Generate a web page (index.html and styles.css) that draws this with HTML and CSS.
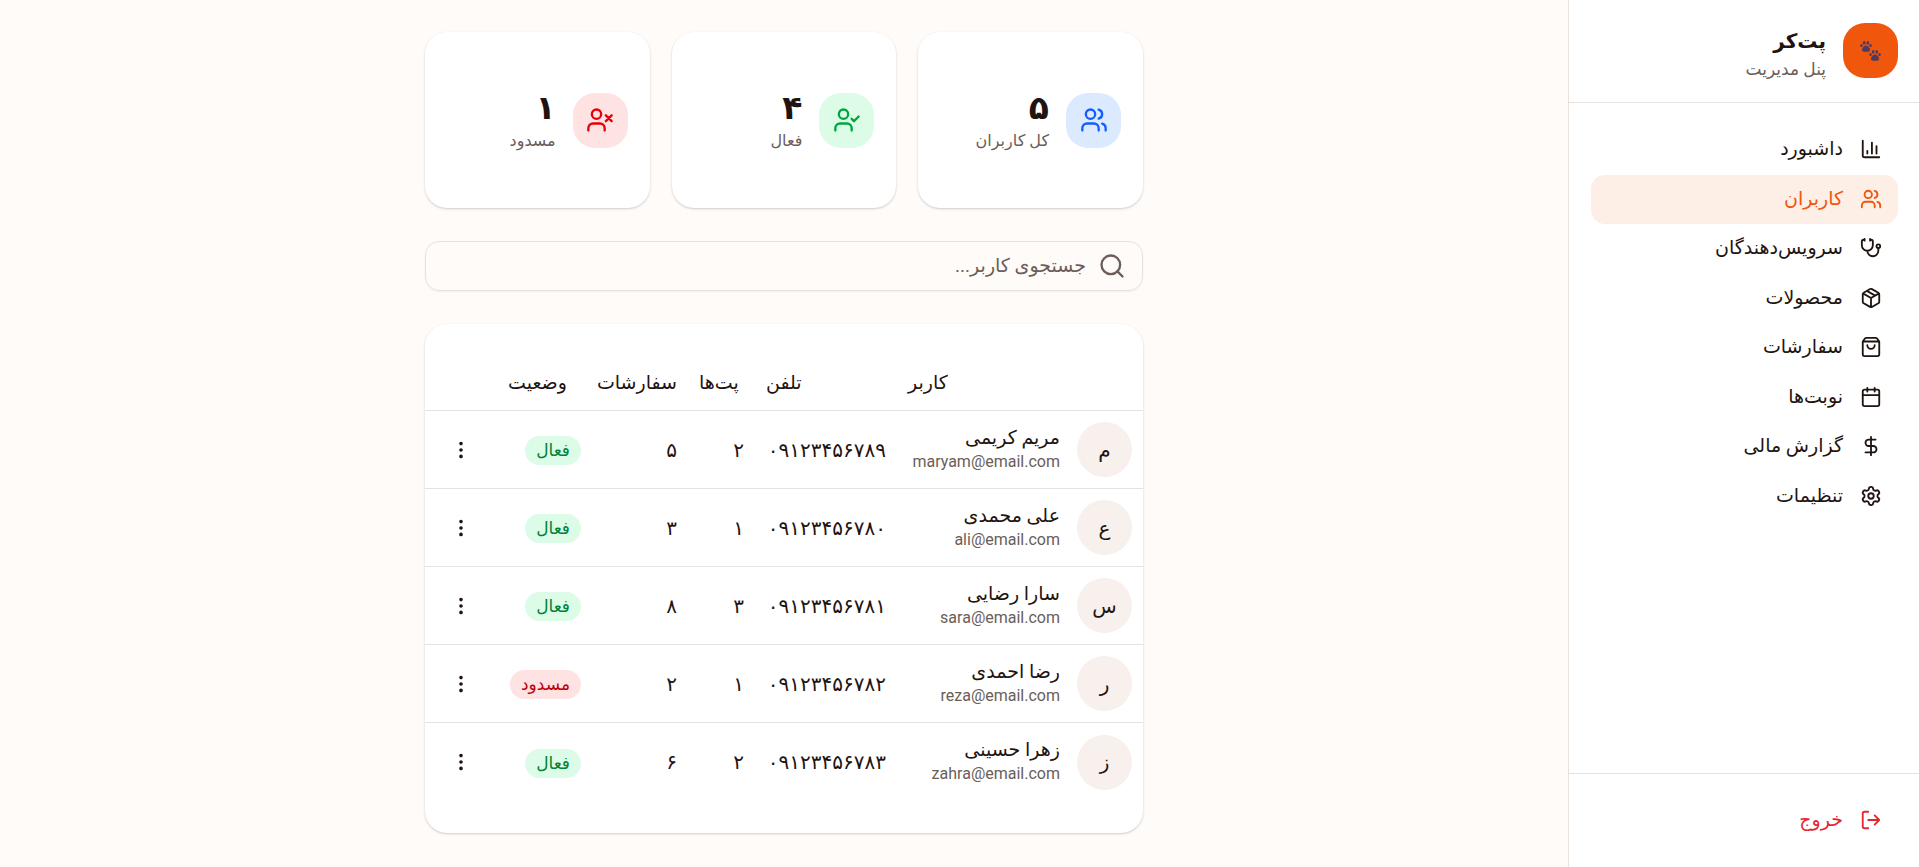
FILE: index.html
```html
<!DOCTYPE html>
<html lang="fa" dir="rtl">
<head>
<meta charset="utf-8">
<meta name="viewport" content="width=device-width, initial-scale=1">
<title>پت‌کر - کاربران</title>
<link rel="stylesheet" href="styles.css">
</head>
<body>
<svg class="sprite" aria-hidden="true">
  <symbol id="i-chart" viewBox="0 0 24 24"><path d="M3 3v16a2 2 0 0 0 2 2h16M18 17V9M13 17V5M8 17v-3"/></symbol>
  <symbol id="i-users" viewBox="0 0 24 24"><path d="M16 21v-2a4 4 0 0 0-4-4H6a4 4 0 0 0-4 4v2M16 3.128a4 4 0 0 1 0 7.744M22 21v-2a4 4 0 0 0-3-3.87"/><circle cx="9" cy="7" r="4"/></symbol>
  <symbol id="i-check" viewBox="0 0 24 24"><path d="m16 11 2 2 4-4M16 21v-2a4 4 0 0 0-4-4H6a4 4 0 0 0-4 4v2"/><circle cx="9" cy="7" r="4"/></symbol>
  <symbol id="i-blocked" viewBox="0 0 24 24"><path d="m17 8 5 5M22 8l-5 5M16 21v-2a4 4 0 0 0-4-4H6a4 4 0 0 0-4 4v2"/><circle cx="9" cy="7" r="4"/></symbol>
  <symbol id="i-steth" viewBox="0 0 24 24"><path d="M11 2v2M5 2v2M5 3H4a2 2 0 0 0-2 2v4a6 6 0 0 0 12 0V5a2 2 0 0 0-2-2h-1M8 15a6 6 0 0 0 12 0v-3"/><circle cx="20" cy="10" r="2"/></symbol>
  <symbol id="i-package" viewBox="0 0 24 24"><path d="M11 21.73a2 2 0 0 0 2 0l7-4A2 2 0 0 0 21 16V8a2 2 0 0 0-1-1.73l-7-4a2 2 0 0 0-2 0l-7 4A2 2 0 0 0 3 8v8a2 2 0 0 0 1 1.73zM12 22V12M3.29 7 12 12l8.71-5M7.5 4.27l9 5.15"/></symbol>
  <symbol id="i-bag" viewBox="0 0 24 24"><path d="M16 10a4 4 0 0 1-8 0M3.103 6.034h17.794M3.4 5.467a2 2 0 0 0-.4 1.2V20a2 2 0 0 0 2 2h14a2 2 0 0 0 2-2V6.667a2 2 0 0 0-.4-1.2l-2-2.667A2 2 0 0 0 17 2H7a2 2 0 0 0-1.6.8z"/></symbol>
  <symbol id="i-calendar" viewBox="0 0 24 24"><path d="M8 2v4M16 2v4M3 10h18"/><rect x="3" y="4" width="18" height="18" rx="2"/></symbol>
  <symbol id="i-dollar" viewBox="0 0 24 24"><path d="M12 2v20M17 5H9.500a3.500 3.500 0 0 0 0 7h5a3.500 3.500 0 0 1 0 7H6"/></symbol>
  <symbol id="i-settings" viewBox="0 0 24 24"><path d="M9.671 4.136a2.340 2.340 0 0 1 4.659 0 2.340 2.340 0 0 0 3.319 1.915 2.340 2.340 0 0 1 2.330 4.033 2.340 2.340 0 0 0 0 3.831 2.340 2.340 0 0 1-2.330 4.033 2.340 2.340 0 0 0-3.319 1.915 2.340 2.340 0 0 1-4.659 0 2.340 2.340 0 0 0-3.320-1.915 2.340 2.340 0 0 1-2.330-4.033 2.340 2.340 0 0 0 0-3.831A2.340 2.340 0 0 1 6.350 6.051a2.340 2.340 0 0 0 3.319-1.915"/><circle cx="12" cy="12" r="3"/></symbol>
  <symbol id="i-logout" viewBox="0 0 24 24"><path d="m16 17 5-5-5-5M21 12H9M9 21H5a2 2 0 0 1-2-2V5a2 2 0 0 1 2-2h4"/></symbol>
  <symbol id="i-search" viewBox="0 0 24 24"><path d="m21 21-4.340-4.340"/><circle cx="11" cy="11" r="8"/></symbol>
  <symbol id="i-dots" viewBox="0 0 24 24"><circle cx="12" cy="12" r="1"/><circle cx="12" cy="5" r="1"/><circle cx="12" cy="19" r="1"/></symbol>
  <symbol id="paw" viewBox="0 0 12 11"><ellipse cx="1.500" cy="4.500" rx="1.300" ry="1.600"/><ellipse cx="4.200" cy="1.900" rx="1.400" ry="1.800"/><ellipse cx="7.800" cy="1.900" rx="1.400" ry="1.800"/><ellipse cx="10.500" cy="4.500" rx="1.300" ry="1.600"/><path d="M6 4.400c2 0 4 2.400 4 4.400 0 1.400-1 1.900-2 1.900H4c-1 0-2-.5-2-1.900 0-2 2-4.400 4-4.400z"/></symbol>
</svg>

<div class="app">
  <aside class="sidebar">
    <header class="brand">
      <span class="brand-logo"><svg viewBox="0 0 22 20" aria-hidden="true"><use href="#paw" x="0" y="0" width="12" height="11"/><use href="#paw" x="9" y="9" width="12" height="11"/></svg></span>
      <div class="brand-text">
        <h1 class="brand-name">پت‌کر</h1>
        <p class="brand-sub">پنل مدیریت</p>
      </div>
    </header>
    <nav class="nav">
      <a class="nav-item" href="#dashboard"><svg class="icon"><use href="#i-chart"/></svg>داشبورد</a>
      <a class="nav-item nav-item-active" href="#users" aria-current="page"><svg class="icon"><use href="#i-users"/></svg>کاربران</a>
      <a class="nav-item" href="#providers"><svg class="icon"><use href="#i-steth"/></svg>سرویس‌دهندگان</a>
      <a class="nav-item" href="#products"><svg class="icon"><use href="#i-package"/></svg>محصولات</a>
      <a class="nav-item" href="#orders"><svg class="icon"><use href="#i-bag"/></svg>سفارشات</a>
      <a class="nav-item" href="#appointments"><svg class="icon"><use href="#i-calendar"/></svg>نوبت‌ها</a>
      <a class="nav-item" href="#finance"><svg class="icon"><use href="#i-dollar"/></svg>گزارش مالی</a>
      <a class="nav-item" href="#settings"><svg class="icon"><use href="#i-settings"/></svg>تنظیمات</a>
    </nav>
    <footer class="sidebar-foot">
      <button class="nav-item nav-item-exit" type="button"><svg class="icon"><use href="#i-logout"/></svg>خروج</button>
    </footer>
  </aside>

  <main class="main">
    <div class="content">
      <section class="stats">
        <div class="card stat">
          <span class="stat-icon stat-icon-blue"><svg class="icon icon-lg"><use href="#i-users"/></svg></span>
          <div><p class="stat-value">۵</p><p class="stat-label">کل کاربران</p></div>
        </div>
        <div class="card stat">
          <span class="stat-icon stat-icon-green"><svg class="icon icon-lg"><use href="#i-check"/></svg></span>
          <div><p class="stat-value">۴</p><p class="stat-label">فعال</p></div>
        </div>
        <div class="card stat">
          <span class="stat-icon stat-icon-red"><svg class="icon icon-lg"><use href="#i-blocked"/></svg></span>
          <div><p class="stat-value">۱</p><p class="stat-label">مسدود</p></div>
        </div>
      </section>

      <label class="search">
        <svg class="icon icon-lg"><use href="#i-search"/></svg>
        <input class="search-input" type="text" aria-label="جستجوی کاربر" placeholder="جستجوی کاربر...">
      </label>

      <section class="card table-card">
        <table class="users">
          <colgroup><col class="col-user"><col class="col-phone"><col class="col-pets"><col class="col-orders"><col class="col-status"><col class="col-actions"></colgroup>
          <thead>
            <tr><th>کاربر</th><th>تلفن</th><th>پت‌ها</th><th>سفارشات</th><th>وضعیت</th><th></th></tr>
          </thead>
          <tbody>
            <tr>
              <td><div class="user"><span class="avatar">م</span><div><p class="user-name">مریم کریمی</p><p class="user-mail">maryam@email.com</p></div></div></td>
              <td>۰۹۱۲۳۴۵۶۷۸۹</td><td>۲</td><td>۵</td><td><span class="badge badge-green">فعال</span></td>
              <td><button class="more" type="button" aria-label="عملیات"><svg class="icon"><use href="#i-dots"/></svg></button></td>
            </tr>
            <tr>
              <td><div class="user"><span class="avatar">ع</span><div><p class="user-name">علی محمدی</p><p class="user-mail">ali@email.com</p></div></div></td>
              <td>۰۹۱۲۳۴۵۶۷۸۰</td><td>۱</td><td>۳</td><td><span class="badge badge-green">فعال</span></td>
              <td><button class="more" type="button" aria-label="عملیات"><svg class="icon"><use href="#i-dots"/></svg></button></td>
            </tr>
            <tr>
              <td><div class="user"><span class="avatar">س</span><div><p class="user-name">سارا رضایی</p><p class="user-mail">sara@email.com</p></div></div></td>
              <td>۰۹۱۲۳۴۵۶۷۸۱</td><td>۳</td><td>۸</td><td><span class="badge badge-green">فعال</span></td>
              <td><button class="more" type="button" aria-label="عملیات"><svg class="icon"><use href="#i-dots"/></svg></button></td>
            </tr>
            <tr>
              <td><div class="user"><span class="avatar">ر</span><div><p class="user-name">رضا احمدی</p><p class="user-mail">reza@email.com</p></div></div></td>
              <td>۰۹۱۲۳۴۵۶۷۸۲</td><td>۱</td><td>۲</td><td><span class="badge badge-red">مسدود</span></td>
              <td><button class="more" type="button" aria-label="عملیات"><svg class="icon"><use href="#i-dots"/></svg></button></td>
            </tr>
            <tr>
              <td><div class="user"><span class="avatar">ز</span><div><p class="user-name">زهرا حسینی</p><p class="user-mail">zahra@email.com</p></div></div></td>
              <td>۰۹۱۲۳۴۵۶۷۸۳</td><td>۲</td><td>۶</td><td><span class="badge badge-green">فعال</span></td>
              <td><button class="more" type="button" aria-label="عملیات"><svg class="icon"><use href="#i-dots"/></svg></button></td>
            </tr>
          </tbody>
        </table>
      </section>
    </div>
  </main>
</div>
</body>
</html>
```
FILE: styles.css
```css
:root {
  --bg: #fffbf8;
  --text: #1f1411;
  --muted: #6b5d58;
  --line: #e9e1dc;
  --primary: #f0560c;
}

* { box-sizing: border-box; }

body {
  margin: 0;
  background: var(--bg);
  color: var(--text);
  font-family: Roboto, "DejaVu Sans", sans-serif;
  font-size: 19px;
  line-height: 1.5;
}

h1, p { margin: 0; }

button, input { font: inherit; color: inherit; }

.sprite { position: absolute; width: 0; height: 0; }

.icon {
  flex: none;
  width: 22px;
  height: 22px;
  fill: none;
  stroke: currentColor;
  stroke-width: 2;
  stroke-linecap: round;
  stroke-linejoin: round;
}

.icon-lg { width: 28px; height: 28px; }

.app { display: flex; min-height: 100vh; }

/* Sidebar */
.sidebar {
  display: flex;
  flex: none;
  flex-direction: column;
  width: 351px;
  background: #fff;
  border-left: 1px solid var(--line);
}

.brand {
  display: flex;
  align-items: center;
  gap: 17px;
  padding: 20px 21px 21px;
  border-bottom: 1px solid var(--line);
}

.brand-logo {
  display: grid;
  flex: none;
  place-items: center;
  width: 55px;
  height: 55px;
  border-radius: 22px;
  background: var(--primary);
}

.brand-logo svg { width: 22px; height: 20px; fill: #4f3b5d; }

.brand-text { padding-top: 5px; }

.brand-name { font-size: 20px; font-weight: 700; line-height: 32px; }

.brand-sub { color: var(--muted); font-size: 17px; line-height: 24px; }

.nav { flex: 1; padding: 22px 21px 22px 22px; }

.nav-item {
  display: flex;
  align-items: center;
  gap: 17px;
  width: 100%;
  padding: 10px 16px 11px;
  border: 0;
  border-radius: 14px;
  background: none;
  color: var(--text);
  text-align: right;
  text-decoration: none;
  cursor: pointer;
}

.nav-item-active { background: #fdeee6; color: var(--primary); }

.nav-item-exit { color: #e7252f; }

.sidebar-foot { padding: 22px 21px; border-top: 1px solid var(--line); }

/* Content */
.main { flex: 1; min-width: 0; padding: 32px; }

.content {
  display: flex;
  flex-direction: column;
  gap: 33px;
  max-width: 718px;
  margin: 0 auto;
}

.card {
  border-radius: 22px;
  background: #fff;
  box-shadow: 0 1px 3px rgb(0 0 0 / 10%), 0 1px 2px rgb(0 0 0 / 10%);
}

.stats { display: grid; grid-template-columns: repeat(3, 1fr); gap: 22px; }

.stat { display: flex; align-items: center; gap: 17px; padding: 55px 22px; }

.stat-icon {
  display: grid;
  flex: none;
  place-items: center;
  width: 55px;
  height: 55px;
  border-radius: 22px;
}

.stat-icon-blue { background: #dbeafe; color: #155dfc; }
.stat-icon-green { background: #dcfce7; color: #00a63e; }
.stat-icon-red { background: #ffe2e2; color: #e7000b; }

.stat-value { font-size: 33px; font-weight: 700; line-height: 42px; }

.stat-label { color: var(--muted); font-size: 16px; line-height: 24px; }

.search {
  display: flex;
  align-items: center;
  gap: 12px;
  height: 50px;
  padding: 0 16px;
  border: 1px solid #e7e2df;
  border-radius: 14px;
  box-shadow: 0 1px 2px rgb(0 0 0 / 5%);
  color: var(--muted);
}

.search-input {
  flex: 1;
  min-width: 0;
  padding: 0;
  border: 0;
  outline: 0;
  background: none;
}

.search-input::placeholder { color: var(--muted); opacity: 1; }

/* Users table */
.table-card { padding: 33px 0 32px; }

.users {
  width: 100%;
  table-layout: fixed;
  border-collapse: separate;
  border-spacing: 0;
}

.col-user { width: 246px; }
.col-phone { width: 142px; }
.col-pets { width: 67px; }
.col-orders { width: 96px; }
.col-status { width: 95px; }
.col-actions { width: 72px; }

.users th,
.users td {
  padding: 0 11px;
  border-bottom: 1px solid #e7e2df;
  white-space: nowrap;
}

.users th { height: 54px; font-weight: 400; text-align: left; }

.users td { height: 78px; font-size: 20px; }

.users tbody tr:last-child td { border-bottom: 0; }

.user { display: flex; align-items: center; gap: 17px; }

.avatar {
  display: grid;
  flex: none;
  place-items: center;
  width: 55px;
  height: 55px;
  border-radius: 50%;
  background: #f7f0ec;
}

.user-name { font-size: 19px; line-height: 24px; }

.user-mail { color: var(--muted); font-size: 16px; line-height: 24px; }

.badge {
  display: inline-block;
  padding: 3px 11px;
  border-radius: 16px;
  font-size: 17px;
  line-height: 23px;
  vertical-align: middle;
}

.badge-green { background: #dcfce7; color: #008236; }
.badge-red { background: #ffe2e2; color: #c10007; }

.more {
  display: grid;
  place-items: center;
  width: 50px;
  height: 44px;
  padding: 0;
  border: 0;
  background: none;
  cursor: pointer;
}
```
